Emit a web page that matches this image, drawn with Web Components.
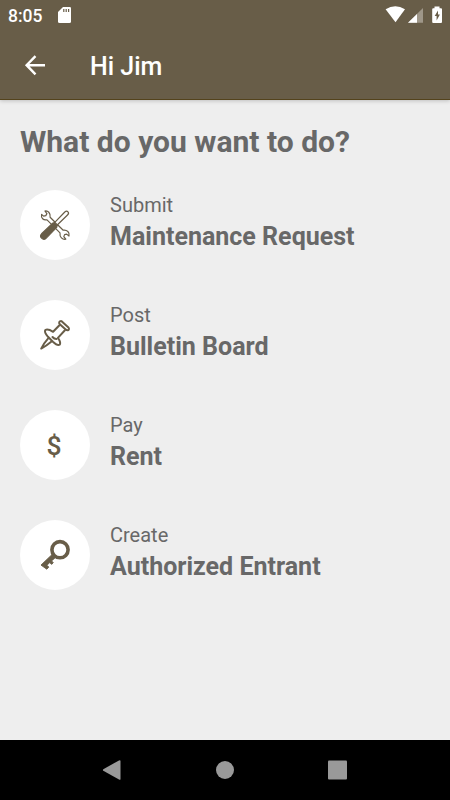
<!DOCTYPE html>
<html lang="en">
<head>
<meta charset="utf-8">
<title>Hi Jim</title>
<style>
  body {
    margin: 0;
    font-family: Roboto, sans-serif;
  }
</style>
</head>
<body>
<resident-screen>
  <status-bar slot="top" time="8:05"></status-bar>
  <app-bar slot="top">Hi Jim</app-bar>
  <span slot="heading">What do you want to do?</span>

  <action-row label="Submit" name="Maintenance Request">
    <svg width="30" height="30" viewBox="0 0 30 30" fill="none" stroke="#685d48" stroke-width="1.2" stroke-linejoin="round">
      <path d="M4.9 1 L6.9 3.6 L5.8 5.6 L3.6 6.1 L1.6 4.4 C.8 8 3.4 10.6 7 9.8 L20 22.8 C19.4 27 22.5 29.8 25.8 29.2 L23.8 26.6 L24.6 24.6 L26.6 24.1 L29 26 C29.9 22.3 27 19.6 23.2 20.2 L10.1 7.2 C10.7 3 7.8 .3 4.9 1 Z" fill="#fff"/>
      <path d="M13.6 13.6 L24.8 2 Q26.6 .4 28 1.8 Q29.3 3.2 27.5 5 L16.2 16 Z" fill="#fff"/>
      <path d="M12.7 13.1 L15.2 12.7 L17.3 14.9 L16.7 17.3 L6 28.3 Q3.8 30.4 1.6 28.2 Q-.5 26 1.6 23.8 Z" fill="#685d48"/>
    </svg>
  </action-row>

  <action-row label="Post" name="Bulletin Board">
    <svg width="30" height="30" viewBox="0 0 30 30" fill="none" stroke="#685d48" stroke-width="2" stroke-linejoin="round" stroke-linecap="round">
      <path d="M19.3 2 Q20.4 .3 22.4 1.9 L28.2 7.2 Q29.7 9 28.3 10.1 Q27 10.7 25.4 9.3 L20.1 4.6 Q18.6 3.1 19.3 2 Z"/>
      <path d="M19.4 5.2 L13.1 11.8 Q7.9 8.5 5.3 10 Q4 12.3 8 16.8 L12.9 21.8 Q17.7 26.4 19.8 24.6 Q21.1 22.5 17.9 17.9 L24.9 10.3"/>
      <path d="M12.5 17 Q14.1 18.8 16.5 19"/>
      <path d="M8 18.6 Q4 23 1.2 28.6 Q6.5 25.8 11.2 21.8"/>
    </svg>
  </action-row>

  <action-row label="Pay" name="Rent">
    <span class="currency">$</span>
  </action-row>

  <action-row label="Create" name="Authorized Entrant">
    <svg width="30" height="30" viewBox="0 0 30 30" fill="#685d48" stroke="#685d48" stroke-linejoin="round">
      <circle cx="20" cy="9.7" r="8.1" fill="none" stroke-width="3.6"/>
      <path d="M12.4 14.2 L15.5 17.4 L11.6 20.9 L13.3 22.7 L11.6 24.4 L9.8 22.6 L6.9 25.2 L8.8 27.1 L6.8 29.2 L1 25.1 Z" stroke-width=".9"/>
    </svg>
  </action-row>

  <nav-bar slot="bottom"></nav-bar>
</resident-screen>

<script>
class ResidentScreen extends HTMLElement {
  constructor() {
    super()
    this.attachShadow({ mode: 'open' })
    this.shadowRoot.innerHTML = `
        <style>
            :host {
                display: flex;
                flex-direction: column;
                width: 450px;
                height: 800px;
                background: #eee;
                color: #686868;
                overflow: hidden;
            }
            header {
                flex: none;
                background: #685d48;
                border-bottom: 1px solid #54431c;
                box-shadow: 0 1px 4px rgba(0, 0, 0, 0.2);
            }
            main {
                flex: 1;
                padding: 23px 20px 0;
            }
            h1 {
                margin: 0 0 29.4px;
                font-size: 30.05px;
                line-height: 38px;
                font-weight: 700;
                white-space: nowrap;
            }
            .actions {
                display: flex;
                flex-direction: column;
                gap: 40px;
            }
        </style>
        <header><slot name="top"></slot></header>
        <main>
            <h1><slot name="heading"></slot></h1>
            <div class="actions"><slot></slot></div>
        </main>
        <slot name="bottom"></slot>
    `
  }
}

class StatusBar extends HTMLElement {
  constructor() {
    super()
    this.attachShadow({ mode: 'open' })
    this.shadowRoot.innerHTML = `
        <style>
            :host {
                display: flex;
                align-items: center;
                height: 30px;
                padding: 0 8px;
                color: #fff;
                font-size: 17.5px;
                font-weight: 500;
            }
            .time {
                width: 50px;
                line-height: 30px;
                padding-top: 1px;
            }
            svg {
                display: block;
            }
            .right {
                margin-left: auto;
            }
        </style>
        <span class="time"></span>
        <svg width="14" height="30" viewBox="0 0 14 30">
            <path d="M5 7 H11.7 Q13 7 13 8.3 V21.5 Q13 23 11.5 23 H1.5 Q0 23 0 21.5 V12 Z" fill="#fff"/>
            <path d="M5.8 9 V12 M8.2 9 V12 M10.6 9 V12" stroke="#685d48" stroke-width="1.2"/>
        </svg>
        <svg class="right" width="57" height="30" viewBox="385 0 57 30">
            <path d="M385.6 9.2 Q395.3 3.2 405 9.2 L395.5 22.3 Z" fill="#fff"/>
            <path d="M423 8 V22.7 H408 Z" fill="#9f9789"/>
            <path d="M417 14 V22.7 H408 Z" fill="#fff"/>
            <path d="M434.5 6.5 H439.5 V8.2 H441 Q442 8.2 442 9.2 V22 Q442 23 441 23 H433.2 Q432.2 23 432.2 22 V9.2 Q432.2 8.2 433.2 8.2 H434.5 Z" fill="#fff"/>
            <path d="M438 10.5 L434.7 16 H436.6 V20.5 L439.9 14.5 H438 Z" fill="#685d48"/>
        </svg>
    `
  }

  connectedCallback() {
    this.shadowRoot.querySelector('.time').textContent = this.getAttribute('time')
  }
}

class AppBar extends HTMLElement {
  constructor() {
    super()
    this.attachShadow({ mode: 'open' })
    this.shadowRoot.innerHTML = `
        <style>
            :host {
                display: flex;
                align-items: center;
                gap: 44px;
                height: 69px;
                padding-left: 24px;
                color: #fff;
                font-size: 25px;
                font-weight: 500;
            }
            span {
                padding-top: 4px;
            }
        </style>
        <svg width="22" height="22" viewBox="0 0 22 22" fill="none" stroke="#fff" stroke-width="2.4">
            <path d="M21 11.2 H3 M11.5 2.1 L2.6 11.2 L11.5 20.3"/>
        </svg>
        <span><slot></slot></span>
    `
  }
}

class ActionRow extends HTMLElement {
  constructor() {
    super()
    this.attachShadow({ mode: 'open' })
    this.shadowRoot.innerHTML = `
        <style>
            :host {
                display: flex;
                gap: 20px;
                height: 70px;
            }
            .icon {
                display: grid;
                place-items: center;
                flex: none;
                width: 70px;
                height: 70px;
                border-radius: 50%;
                background: #fff;
            }
            .text {
                display: flex;
                flex-direction: column;
                padding-top: 0.5px;
                white-space: nowrap;
            }
            .label {
                font-size: 20px;
                line-height: 28px;
            }
            .name {
                font-size: 25.03px;
                line-height: 35px;
                font-weight: 700;
            }
            ::slotted(svg) {
                display: block;
                overflow: visible;
            }
            ::slotted(.currency) {
                color: #685d48;
                font-size: 25px;
                font-weight: 500;
                line-height: 30px;
                margin-left: -1px;
                padding-top: 3px;
                transform: scaleX(1.06);
            }
        </style>
        <div class="icon"><slot></slot></div>
        <div class="text">
            <span class="label"></span>
            <span class="name"></span>
        </div>
    `
  }

  connectedCallback() {
    this.shadowRoot.querySelector('.label').textContent = this.getAttribute('label')
    this.shadowRoot.querySelector('.name').textContent = this.getAttribute('name')
  }
}

class NavBar extends HTMLElement {
  constructor() {
    super()
    this.attachShadow({ mode: 'open' })
    this.shadowRoot.innerHTML = `
        <style>
            :host {
                display: flex;
                justify-content: center;
                align-items: center;
                gap: 92.5px;
                height: 60px;
                flex: none;
                background: #000;
            }
            svg {
                fill: #999;
                overflow: visible;
            }
        </style>
        <svg width="20" height="20" viewBox="0 0 20 20"><path d="M16 .4 Q17.5 -.3 17.5 1 V19 Q17.5 20.3 16 19.6 L.3 10.8 Q-.5 10 .3 9.2 Z"/></svg>
        <svg width="20" height="20" viewBox="0 0 20 20"><circle cx="10" cy="10" r="9"/></svg>
        <svg width="20" height="20" viewBox="0 0 20 20"><rect x="0" y=".5" width="19" height="19" rx="1"/></svg>
    `
  }
}

customElements.define('resident-screen', ResidentScreen)
customElements.define('status-bar', StatusBar)
customElements.define('app-bar', AppBar)
customElements.define('action-row', ActionRow)
customElements.define('nav-bar', NavBar)
</script>
</body>
</html>
